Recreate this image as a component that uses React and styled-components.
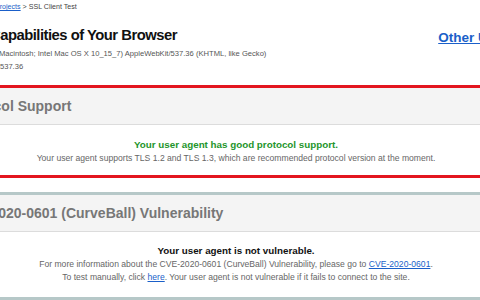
import React from 'react';
import styled, { createGlobalStyle } from 'styled-components';

const colors = {
  text: '#111',
  muted: '#666',
  headerText: '#777',
  link: '#1a5fc9',
  good: '#24952b',
  danger: '#e3161f',
  neutral: '#b6c8c8',
  headerBg: '#f4f4f4',
  separator: '#dcdcdc',
};

const GlobalStyle = createGlobalStyle`
  html, body {
    margin: 0;
    padding: 0;
    background: #fff;
    overflow: hidden;
  }
  body {
    width: 480px;
    height: 300px;
    font-family: 'Liberation Sans', Arial, sans-serif;
    color: ${colors.text};
  }
`;

// the page is wider than the window; its left part is cut off
const Page = styled.div`
  margin-left: -55px;
  width: 582px;
`;

const Header = styled.header`
  display: flex;
  align-items: flex-start;
  margin-right: -30px;
  height: 85px;
`;

const HeaderMain = styled.div`
  display: flex;
  flex-direction: column;
  padding-left: 44px;
`;

const Breadcrumb = styled.div`
  margin: 2px 0 0 6px;
  font-size: 7.1px;
  line-height: 10px;
  color: #444;

  a {
    color: ${colors.link};
    text-decoration: underline;
  }
`;

const Title = styled.h1`
  margin: 14px 0 0 1px;
  font-size: 14.8px;
  letter-spacing: -0.5px;
  line-height: 18px;
  font-weight: 700;
  color: ${colors.text};
  white-space: nowrap;
`;

const UserAgent = styled.div`
  margin: 2.5px 0 0 -31px;
  font-size: 7.6px;
  line-height: 13px;
  color: #555;
  white-space: nowrap;
`;

const UaLine = styled.div`
  padding-left: ${(p) => p.$indent || 0}px;
`;

const OtherLink = styled.a`
  margin: 30px 0 0 auto;
  font-size: 13.5px;
  line-height: 16px;
  font-weight: 700;
  color: ${colors.link};
  text-decoration: underline;
  white-space: nowrap;
`;

const Panel = styled.section`
  border: 3px solid ${(p) => (p.$status === 'bad' ? colors.danger : colors.neutral)};
  margin-bottom: 14px;
  background: #fff;
`;

const PanelHeader = styled.h2`
  margin: 0;
  padding: 0 9px;
  height: 36px;
  display: flex;
  align-items: center;
  background: ${colors.headerBg};
  border-bottom: 1px solid ${colors.separator};
  font-size: 14px;
  font-weight: 700;
  color: ${colors.headerText};
`;

const PanelBody = styled.div`
  padding: ${(p) => p.$pad || '12px 10px 12px'};
  text-align: center;
  font-size: 8.6px;
  line-height: 13.5px;
  color: ${colors.muted};

  a {
    color: ${colors.link};
    text-decoration: underline;
  }
`;

const Verdict = styled.div`
  font-size: 9.8px;
  line-height: 14px;
  font-weight: 700;
  color: ${(p) => (p.$good ? colors.good : colors.text)};
`;

export default function App() {
  return (
    <>
      <GlobalStyle />
      <Page>
        <Header>
          <HeaderMain>
            <Breadcrumb>
              <a href="#">Projects</a> &gt; SSL Client Test
            </Breadcrumb>
            <Title>Capabilities of Your Browser</Title>
            <UserAgent>
              <UaLine>
                Mozilla/5.0 (Macintosh; Intel Mac OS X 10_15_7) AppleWebKit/537.36 (KHTML, like Gecko)
              </UaLine>
              <UaLine $indent={20}>Safari/537.36</UaLine>
            </UserAgent>
          </HeaderMain>
          <OtherLink href="#">Other User Agents</OtherLink>
        </Header>

        <Panel $status="bad">
          <PanelHeader>Protocol Support</PanelHeader>
          <PanelBody $pad="13px 10px 9px">
            <Verdict $good>Your user agent has good protocol support.</Verdict>
            <div>
              Your user agent supports TLS 1.2 and TLS 1.3, which are recommended protocol version at the moment.
            </div>
          </PanelBody>
        </Panel>

        <Panel>
          <PanelHeader>CVE-2020-0601 (CurveBall) Vulnerability</PanelHeader>
          <PanelBody>
            <Verdict>Your user agent is not vulnerable.</Verdict>
            <div>
              For more information about the CVE-2020-0601 (CurveBall) Vulnerability, please go to{' '}
              <a href="#">CVE-2020-0601</a>.
            </div>
            <div>
              To test manually, click <a href="#">here</a>. Your user agent is not vulnerable if it fails
              to connect to the site.
            </div>
          </PanelBody>
        </Panel>
      </Page>
    </>
  );
}
